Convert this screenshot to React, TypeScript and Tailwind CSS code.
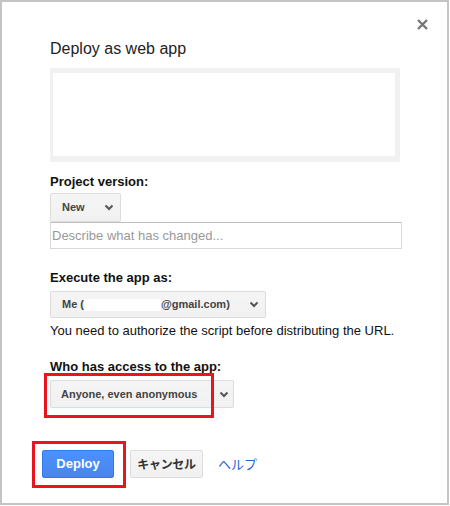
const Chevron = () => (
  <svg width="10" height="7" viewBox="0 0 10 7" className="shrink-0">
    <path d="M1.5 1.5 5 5 8.5 1.5" fill="none" stroke="#555" strokeWidth={2} />
  </svg>
);

function Select({ width, height, children }: { width: string; height: string; children: React.ReactNode }) {
  return (
    <div
      className={`${width} ${height} flex items-center justify-between rounded-[2px] border border-[#dcdcdc] bg-gradient-to-b from-[#f5f5f5] to-[#f1f1f1] pl-[11px] pr-[6px] text-[11px] font-bold text-[#444]`}
    >
      <div className="flex items-center">{children}</div>
      <Chevron />
    </div>
  );
}

export default function App() {
  return (
    <div className="w-[450px] h-[506px] bg-white">
      <div className="relative w-[449px] h-[505px] border-2 border-[#c4c4c4] bg-white pl-[48px] pt-[38px] font-['Liberation_Sans',Arial,sans-serif] text-[#222]">
        {/* Close */}
        <button className="absolute top-[17px] right-[19px] w-[11px] h-[11px]">
          <svg width="11" height="11" viewBox="0 0 11 11">
            <path d="M1 1 10 10M10 1 1 10" stroke="#777" strokeWidth={2.4} />
          </svg>
        </button>

        <h1 className="text-[16px] leading-[18px] text-[#222]">Deploy as web app</h1>

        <div className="mt-[10px] w-[350px] h-[94px] border-t-[5px] border-l-[3px] border-r-[5px] border-b-[6px] border-[#f1f1f1] bg-white" />

        {/* Project version */}
        <div className="mt-[12px] text-[13px] leading-[15px] font-bold text-[#111]">Project version:</div>
        <div className="mt-[4px]">
          <Select width="w-[71px]" height="h-[29px]">New</Select>
        </div>
        <div className="w-[352px] h-[27px] border border-[#d9d9d9] border-t-[#c0c0c0] flex items-center pl-[1px] text-[13px] text-[#999]">
          Describe what has changed...
        </div>

        {/* Execute as */}
        <div className="mt-[21px] text-[13px] leading-[15px] font-bold text-[#111]">Execute the app as:</div>
        <div className="mt-[6px]">
          <Select width="w-[216px]" height="h-[27px]">
            <span>Me (</span>
            <span className="w-[77px] h-[12px] bg-white" />
            <span>@gmail.com)</span>
          </Select>
        </div>
        <p className="mt-[5px] text-[13px] leading-[15px] text-[#111]">
          You need to authorize the script before distributing the URL.
        </p>

        {/* Access */}
        <div className="mt-[21px] text-[13px] leading-[15px] font-bold text-[#111]">Who has access to the app:</div>
        <div className="relative mt-[6px] w-[184px]">
          <div className="h-[28px] flex items-center justify-between rounded-[2px] border border-[#dcdcdc] bg-gradient-to-b from-[#f5f5f5] to-[#f1f1f1] pl-[10px] pr-[4px] text-[11px] font-bold text-[#444]">
            <span>Anyone, even anonymous</span>
            <Chevron />
          </div>
          <div className="absolute left-[-6px] top-[-7px] w-[170px] h-[45px] border-[3px] border-[#e8151d]" />
        </div>

        {/* Buttons */}
        <div className="mt-[42px] -ml-[8px] flex items-center">
          <div className="relative">
            <button className="w-[72px] h-[28px] rounded-[2px] border border-[#3079ed] bg-gradient-to-b from-[#4d90fe] to-[#4787ed] text-[13px] font-bold text-white">
              Deploy
            </button>
            <div className="absolute left-[-10px] top-[-9px] w-[94px] h-[47px] border-[3px] border-[#e8151d]" />
          </div>
          <button className="ml-[16px] w-[73px] h-[28px] rounded-[2px] border border-[#dcdcdc] bg-gradient-to-b from-[#f5f5f5] to-[#f1f1f1] text-[12px] font-bold tracking-[-0.3px] text-[#333] font-['Noto_Sans_CJK_JP',sans-serif]">
            キャンセル
          </button>
          <a href="#" className="ml-[15px] text-[13px] text-[#2a5fd9] font-['Noto_Sans_CJK_JP',sans-serif]">
            ヘルプ
          </a>
        </div>
      </div>
    </div>
  );
}
